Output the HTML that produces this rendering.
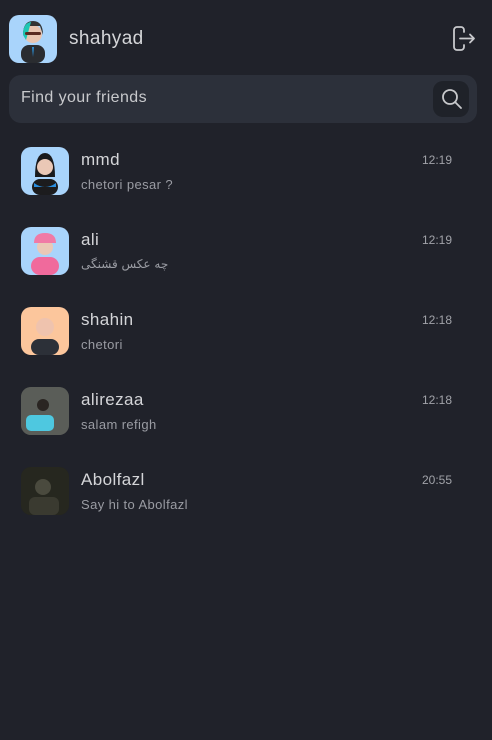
<!DOCTYPE html>
<html><head><meta charset="utf-8"><style>
*{margin:0;padding:0;box-sizing:border-box}
body{width:492px;height:740px;background:#20222a;font-family:"Liberation Sans","DejaVu Sans",sans-serif;color:#d8d9dc;position:relative;overflow:hidden;letter-spacing:0.4px}
.av{position:absolute;width:48px;height:48px;border-radius:10px;overflow:hidden}
.name{position:absolute;font-size:17px;color:#d4d5d8}
.msg{position:absolute;font-size:13px;color:#9a9ca3}
.time{position:absolute;font-size:12px;color:#a0a2a8;right:40px;letter-spacing:0}
</style></head><body>
<div class="av" style="left:9px;top:15px;background:#a9d4fb">
<svg width="48" height="48"><rect x="12" y="30" width="24" height="18" rx="8" fill="#2a2c30"/><path d="M23 32l1 10 1-10z" fill="#2b8fd6"/><circle cx="24" cy="19" r="9" fill="#e8c4b0"/><path d="M14 20q0-14 10-14q10 0 10 14l-3-9h-14z" fill="#333"/><path d="M14 20q0-12 8-13l-5 18z" fill="#1dc6b3"/><rect x="16" y="17" width="16" height="3" rx="1.5" fill="#5a2a20"/></svg></div>
<div class="name" style="left:69px;top:28px;font-size:19px">shahyad</div>
<svg style="position:absolute;left:452px;top:26px" width="24" height="26" fill="none" stroke="#c8c9cc" stroke-width="1.8" stroke-linecap="round" stroke-linejoin="round"><path d="M12 6V4a3 3 0 0 0-3-3H5a3 3 0 0 0-3 3v17a3 3 0 0 0 3 3h4a3 3 0 0 0 3-3v-2"/><path d="M8 12.5h14M18 8.5l4 4-4 4"/></svg>
<div style="position:absolute;left:9px;top:75px;width:468px;height:48px;border-radius:12px;background:#2c303a"></div>
<div style="position:absolute;left:21px;top:89px;font-size:16px;color:#c8c9cc">Find your friends</div>
<div style="position:absolute;left:433px;top:81px;width:36px;height:36px;border-radius:10px;background:#1f2229"></div>
<svg style="position:absolute;left:441px;top:88px" width="22" height="22" fill="none" stroke="#c8c9cc" stroke-width="1.8" stroke-linecap="round"><circle cx="9" cy="9" r="7"/><path d="M14 14l6 6"/></svg>

<div class="av" style="left:21px;top:147px;background:#a9d4fb"><svg width="48" height="48"><rect x="11" y="32" width="26" height="16" rx="8" fill="#1c1c1e"/><path d="M13 36q11 8 22 0v4h-22z" fill="#2a8fe0"/><path d="M14 30q0-24 10-24q10 0 10 24z" fill="#1a1a1c"/><circle cx="24" cy="20" r="8" fill="#eac8b6"/></svg></div>
<div class="name" style="left:81px;top:150px">mmd</div><div class="time" style="top:153px">12:19</div><div class="msg" style="left:81px;top:177px">chetori pesar ?</div>

<div class="av" style="left:21px;top:227px;background:#a9d4fb"><svg width="48" height="48"><rect x="10" y="30" width="28" height="18" rx="9" fill="#f06a9c"/><circle cx="24" cy="20" r="8" fill="#eac8b6"/><path d="M13 16q0-10 11-10q11 0 11 10z" fill="#f07aa6"/></svg></div>
<div class="name" style="left:81px;top:230px">ali</div><div class="time" style="top:233px">12:19</div><div class="msg" style="left:81px;top:257px;font-family:'DejaVu Sans',sans-serif;font-size:12px;letter-spacing:0">چه عکس قشنگی</div>

<div class="av" style="left:21px;top:307px;background:#fcc69c"><svg width="48" height="48"><rect x="10" y="32" width="28" height="16" rx="8" fill="#2c3038"/><circle cx="24" cy="20" r="9" fill="#efc3ae"/></svg></div>
<div class="name" style="left:81px;top:310px">shahin</div><div class="time" style="top:313px">12:18</div><div class="msg" style="left:81px;top:337px">chetori</div>

<div class="av" style="left:21px;top:387px;background:#4a4c48"><svg width="48" height="48"><rect width="48" height="48" fill="#5a5d58"/><rect x="5" y="28" width="28" height="16" rx="5" fill="#4ec8e0"/><circle cx="22" cy="18" r="6" fill="#2a2522"/></svg></div>
<div class="name" style="left:81px;top:390px">alirezaa</div><div class="time" style="top:393px">12:18</div><div class="msg" style="left:81px;top:417px">salam refigh</div>

<div class="av" style="left:21px;top:467px;background:#22241e"><svg width="48" height="48"><rect width="48" height="48" fill="#26271f"/><circle cx="22" cy="20" r="8" fill="#4a4a3e"/><rect x="8" y="30" width="30" height="18" rx="6" fill="#3a3a30"/></svg></div>
<div class="name" style="left:81px;top:470px">Abolfazl</div><div class="time" style="top:473px">20:55</div><div class="msg" style="left:81px;top:497px">Say hi to Abolfazl</div>
</body></html>
